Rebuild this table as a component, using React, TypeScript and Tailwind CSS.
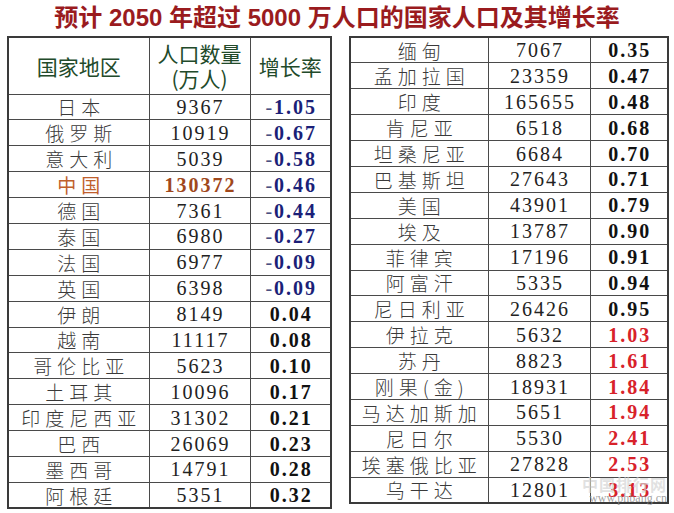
type Row = {
  name: string;
  pop: string;
  rate: string;
  tone?: "neg" | "pos" | "hot" | "cn";
};

const leftRows: Row[] = [
  { name: "日本", pop: "9367", rate: "-1.05", tone: "neg" },
  { name: "俄罗斯", pop: "10919", rate: "-0.67", tone: "neg" },
  { name: "意大利", pop: "5039", rate: "-0.58", tone: "neg" },
  { name: "中国", pop: "130372", rate: "-0.46", tone: "cn" },
  { name: "德国", pop: "7361", rate: "-0.44", tone: "neg" },
  { name: "泰国", pop: "6980", rate: "-0.27", tone: "neg" },
  { name: "法国", pop: "6977", rate: "-0.09", tone: "neg" },
  { name: "英国", pop: "6398", rate: "-0.09", tone: "neg" },
  { name: "伊朗", pop: "8149", rate: "0.04" },
  { name: "越南", pop: "11117", rate: "0.08" },
  { name: "哥伦比亚", pop: "5623", rate: "0.10" },
  { name: "土耳其", pop: "10096", rate: "0.17" },
  { name: "印度尼西亚", pop: "31302", rate: "0.21" },
  { name: "巴西", pop: "26069", rate: "0.23" },
  { name: "墨西哥", pop: "14791", rate: "0.28" },
  { name: "阿根廷", pop: "5351", rate: "0.32" },
];

const rightRows: Row[] = [
  { name: "缅甸", pop: "7067", rate: "0.35" },
  { name: "孟加拉国", pop: "23359", rate: "0.47" },
  { name: "印度", pop: "165655", rate: "0.48" },
  { name: "肯尼亚", pop: "6518", rate: "0.68" },
  { name: "坦桑尼亚", pop: "6684", rate: "0.70" },
  { name: "巴基斯坦", pop: "27643", rate: "0.71" },
  { name: "美国", pop: "43901", rate: "0.79" },
  { name: "埃及", pop: "13787", rate: "0.90" },
  { name: "菲律宾", pop: "17196", rate: "0.91" },
  { name: "阿富汗", pop: "5335", rate: "0.94" },
  { name: "尼日利亚", pop: "26426", rate: "0.95" },
  { name: "伊拉克", pop: "5632", rate: "1.03", tone: "hot" },
  { name: "苏丹", pop: "8823", rate: "1.61", tone: "hot" },
  { name: "刚果(金)", pop: "18931", rate: "1.84", tone: "hot" },
  { name: "马达加斯加", pop: "5651", rate: "1.94", tone: "hot" },
  { name: "尼日尔", pop: "5530", rate: "2.41", tone: "hot" },
  { name: "埃塞俄比亚", pop: "27828", rate: "2.53", tone: "hot" },
  { name: "乌干达", pop: "12801", rate: "3.13", tone: "hot" },
];

const cjk = "font-['Noto_Sans_CJK_SC',sans-serif]";
const serif = "font-['Liberation_Serif','Noto_Serif_CJK_SC',serif]";

const DataRow = ({ row }: { row: Row }) => {
  const neg = row.rate.startsWith("-");
  const num = neg ? row.rate.slice(1) : row.rate;
  let rateColor = "text-[#111]";
  if (row.tone === "neg" || row.tone === "cn") rateColor = "text-[#1b1f78]";
  if (row.tone === "hot") rateColor = "text-[#d8222a]";

  return (
    <tr className="h-[25.9px]">
      <td
        className={`border border-[#4a4a4a] text-center text-[19px] font-light leading-none tracking-[5px] pl-[5px] ${cjk} ${
          row.tone === "cn" ? "text-[#c0602c] font-normal" : "text-[#3a3a3a]"
        }`}
      >
        {row.name}
      </td>
      <td
        className={`border border-[#4a4a4a] text-center text-[20px] leading-none tracking-[2px] pl-[2px] ${serif} ${
          row.tone === "cn" ? "text-[#a0481c] font-bold" : "text-[#222]"
        }`}
      >
        {row.pop}
      </td>
      <td
        className={`border border-[#4a4a4a] text-center text-[20px] font-bold leading-none tracking-[2px] pl-[2px] ${serif} ${rateColor}`}
      >
        {neg && <span className="font-normal text-[#4a4f80]">-</span>}
        {num}
      </td>
    </tr>
  );
};

export default function App() {
  return (
    <div className="relative w-[674px] h-[513px] bg-white overflow-hidden">
      <h1
        className={`h-[36px] pt-[5px] text-center text-[24px] font-bold leading-[26px] text-[#9a1b1e] font-['Liberation_Sans','Noto_Sans_CJK_SC',sans-serif]`}
      >
        预计 2050 年超过 5000 万人口的国家人口及其增长率
      </h1>

      <div className="flex items-start pl-[7px] gap-[17px]">
        <table className="border-collapse border-2 border-[#3a3a3a] w-[323px] table-fixed">
          <colgroup>
            <col className="w-[141px]" />
            <col className="w-[101px]" />
            <col className="w-[81px]" />
          </colgroup>
          <thead>
            <tr className="h-[57px]">
              <th
                className={`border border-[#4a4a4a] text-center text-[21px] font-normal leading-[26px] text-[#224a2a] ${cjk}`}
              >
                国家地区
              </th>
              <th
                className={`border border-[#4a4a4a] text-center text-[21px] font-normal leading-[25px] text-[#224a2a] ${cjk}`}
              >
                人口数量
                <br />
                (万人)
              </th>
              <th
                className={`border border-[#4a4a4a] text-center text-[21px] font-normal leading-[26px] text-[#224a2a] ${cjk}`}
              >
                增长率
              </th>
            </tr>
          </thead>
          <tbody>
            {leftRows.map((r) => (
              <DataRow key={r.name} row={r} />
            ))}
          </tbody>
        </table>

        <table className="border-collapse border-2 border-[#3a3a3a] w-[318px] table-fixed">
          <colgroup>
            <col className="w-[138px]" />
            <col className="w-[102px]" />
            <col className="w-[78px]" />
          </colgroup>
          <tbody>
            {rightRows.map((r) => (
              <DataRow key={r.name} row={r} />
            ))}
          </tbody>
        </table>
      </div>

      {/* watermark */}
      <div className="absolute right-[7px] bottom-[9px] flex flex-col items-end leading-none pointer-events-none">
        <span className={`text-[16px] font-bold text-[#d4d4d4]/70 tracking-[1px] ${cjk}`}>
          中国排行网
        </span>
        <span className={`text-[12px] text-[#8a8a8a]/80 ${serif}`}>www.phbang.cn</span>
      </div>
    </div>
  );
}
